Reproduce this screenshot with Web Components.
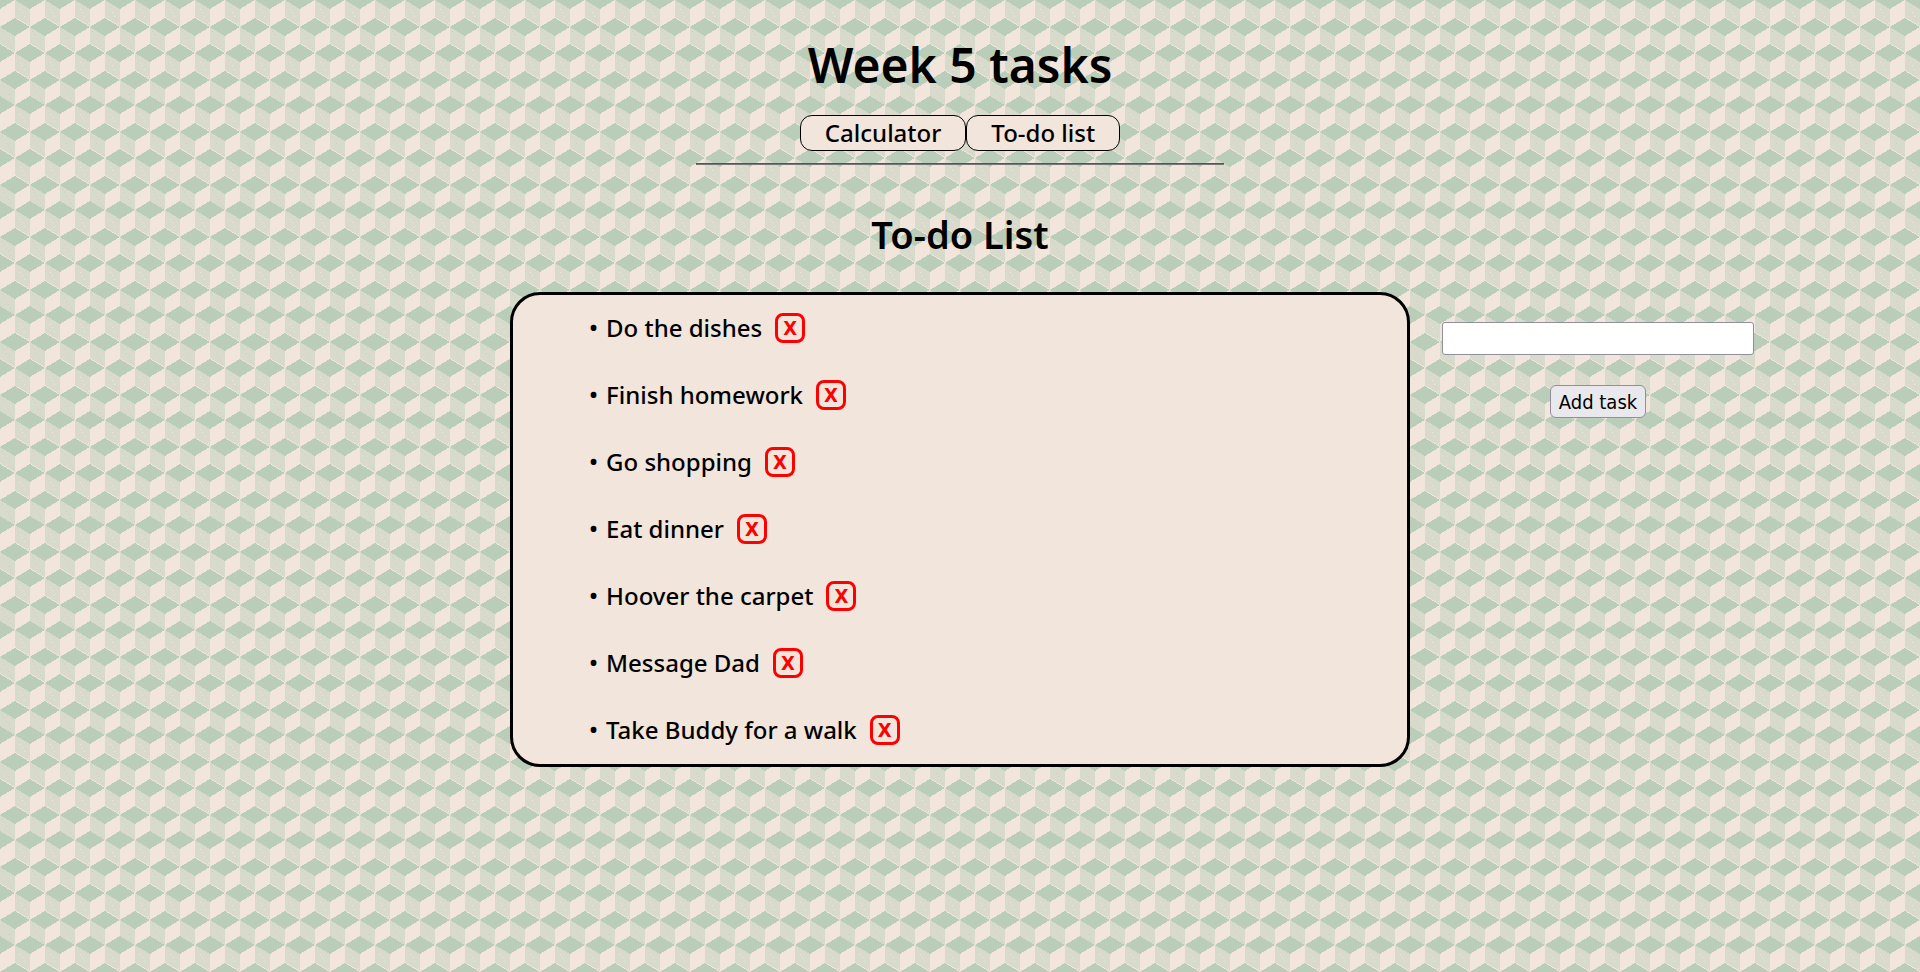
<!DOCTYPE html>
<html lang="en">
<head>
<meta charset="utf-8">
<title>Week 5 tasks</title>
<style>
  :root {
    --cream: #f2e5dc;
    --green: #bacdb8;
  }
  body {
    margin: 0;
    min-height: 100vh;
    color: #000;
    font: 500 24px/36px "Noto Sans", "Open Sans", sans-serif;
    background-color: var(--cream);
    /* four staggered rows of cubes per tile */
    background-image: url("data:image/svg+xml,%3Csvg xmlns='http://www.w3.org/2000/svg' width='30' height='105' shape-rendering='crispEdges'%3E%3Cg fill='%23d8dacb'%3E%3Cpath d='M15 0l15 9v17l-15-9zM0 26l15 9v17l-15-9zM15 53l15 9v17l-15-9zM0 79l15 9v17l-15-9z'/%3E%3C/g%3E%3Cpath fill='%23bacdb8' d='M0-9l15 9-15 9-15-9zM30-9l15 9-15 9-15-9zM15 18l15 9-15 9-15-9zM0 44l15 9-15 9-15-9zM30 44l15 9-15 9-15-9zM15 71l15 9-15 9-15-9zM0 96l15 9-15 9-15-9zM30 96l15 9-15 9-15-9z'/%3E%3Cg fill='none' stroke-dasharray='1 3'%3E%3Cpath stroke='%23f2e5dc' d='M20 9l9 16M20 62l9 16'/%3E%3Cpath stroke='%23c9d3c1' d='M2 31l12 20M2 84l12 20'/%3E%3C/g%3E%3C/svg%3E");
    background-size: 30px 105px;
  }
</style>
</head>
<body>
<week-header heading="Week 5 tasks">
  <nav-button>Calculator</nav-button>
  <nav-button>To-do list</nav-button>
</week-header>
<todo-app heading="To-do List">
  <todo-item>Do the dishes</todo-item>
  <todo-item>Finish homework</todo-item>
  <todo-item>Go shopping</todo-item>
  <todo-item>Eat dinner</todo-item>
  <todo-item>Hoover the carpet</todo-item>
  <todo-item>Message Dad</todo-item>
  <todo-item>Take Buddy for a walk</todo-item>
  <task-form slot="form"></task-form>
</todo-app>
<script>
  const define = (name, html, setup) => customElements.define(name, class extends HTMLElement {
    constructor() {
      super();
      this.attachShadow({ mode: "open" }).innerHTML = html;
    }
    connectedCallback() {
      if (setup) setup(this, this.shadowRoot);
    }
  });

  define("nav-button", `
    <style>
      :host { display: block; }
      button {
        display: block; height: 36px; padding: 0 24px; color: inherit;
        font: inherit; line-height: 34px; background: var(--cream);
        border: 1px solid #000; border-radius: 12px; cursor: pointer;
      }
    </style>
    <button type="button"><slot></slot></button>`);

  define("week-header", `
    <style>
      :host { display: block; padding-top: 29px; }
      h1 { margin: 0; text-align: center; font-size: 48px; font-weight: 600; line-height: 72px; }
      nav { display: flex; justify-content: center; margin-top: 14px; }
      hr { width: 27.5%; height: 2px; margin: 12px auto 0; border: 0; background: linear-gradient(#555 50%, #777 50%); }
    </style>
    <header>
      <h1></h1>
      <nav><slot></slot></nav>
      <hr>
    </header>`,
    (host, root) => { root.querySelector("h1").textContent = host.getAttribute("heading"); });

  define("todo-item", `
    <style>
      :host { display: flex; align-items: center; gap: 13px; }
      .label::before { content: "•"; margin-right: 8px; }
      button {
        width: 30px; height: 30px; padding: 0; color: #f00; background: transparent;
        border: 3px solid #f00; border-radius: 8px; cursor: pointer;
        font: 700 20px/24px "DejaVu Sans Condensed", "DejaVu Sans", sans-serif;
      }
    </style>
    <span class="label"><slot></slot></span>
    <button type="button" title="Remove task">X</button>`,
    (host, root) => {
      host.setAttribute("role", "listitem");
      root.querySelector("button").onclick = () => host.remove();
    });

  define("task-form", `
    <style>
      :host { display: block; }
      form { display: flex; flex-direction: column; align-items: center; gap: 30px; }
      input {
        box-sizing: border-box; width: 100%; height: 33px; padding: 0 4px; background: #fff;
        border: 1px solid #8f8f9d; border-radius: 3px; font: 20px "DejaVu Sans Condensed", sans-serif;
      }
      button {
        height: 33px; padding: 0 8px; color: #000; background: #e9e9ed;
        border: 1px solid #8f8f9d; border-radius: 6px;
        font: 400 20px/30px "DejaVu Sans Condensed", "DejaVu Sans", sans-serif;
      }
    </style>
    <form>
      <input type="text" aria-label="New task">
      <button type="submit">Add task</button>
    </form>`,
    (host, root) => {
      const form = root.querySelector("form");
      form.onsubmit = (event) => {
        event.preventDefault();
        const input = form.querySelector("input");
        if (!input.value.trim()) return;
        const item = document.createElement("todo-item");
        item.textContent = input.value.trim();
        host.before(item);
        input.value = "";
      };
    });

  define("todo-app", `
    <style>
      :host { display: block; padding-top: 42px; }
      h2 { margin: 0 0 31px; text-align: center; font-size: 38px; font-weight: 600; line-height: 54px; }
      .layout { display: grid; grid-template-columns: 1fr minmax(0, 900px) 1fr; align-items: start; }
      .list {
        grid-column: 2; box-sizing: border-box; display: flex; flex-direction: column; gap: 31px;
        padding: 15px 76px 16px; background: var(--cream); border: 3px solid #000; border-radius: 30px;
      }
      .side { width: 312px; margin: 30px 0 0 32px; }
    </style>
    <main>
      <h2></h2>
      <div class="layout">
        <div class="list" role="list"><slot></slot></div>
        <div class="side"><slot name="form"></slot></div>
      </div>
    </main>`,
    (host, root) => { root.querySelector("h2").textContent = host.getAttribute("heading"); });
</script>
</body>
</html>
